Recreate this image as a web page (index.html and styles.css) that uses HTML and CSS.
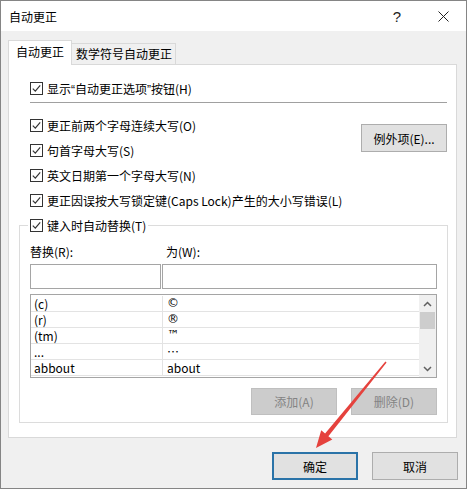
FILE: index.html
```html
<!DOCTYPE html>
<html lang="zh-CN">
<head>
    <meta charset="UTF-8">
    <meta name="viewport" content="width=device-width, initial-scale=1.0">
    <title>自动更正</title>
    <link rel="stylesheet" href="styles.css">
</head>
<body>
    <div class="window">
        <div class="titlebar">
            <span class="title">自动更正</span>
            <span class="tb-btn">?</span>
            <span class="tb-btn">
                <svg width="11" height="11" viewBox="0 0 11 11"><path d="M0.5 0.5 L10.5 10.5 M10.5 0.5 L0.5 10.5" stroke="#222" stroke-width="1"/></svg>
            </span>
        </div>
        <div class="content">
            <div class="tabs">
                <div class="tab active">自动更正</div>
                <div class="tab">数学符号自动更正</div>
            </div>
            <div class="panel">
                <div class="opts">
                    <label class="check"><span class="cb"><svg width="13" height="13" viewBox="0 0 13 13"><rect x="0.5" y="0.5" width="12" height="12" fill="#fff" stroke="#333"/><path d="M2.8 6.6 L5.3 9.1 L10.2 3.4" fill="none" stroke="#333" stroke-width="1.2"/></svg></span><span>显示<span class="latin">“</span>自动更正选项<span class="latin">”</span>按钮(H)</span></label>
                    <div class="sep"></div>
                    <div class="grid">
                        <label class="check"><span class="cb"><svg width="13" height="13" viewBox="0 0 13 13"><rect x="0.5" y="0.5" width="12" height="12" fill="#fff" stroke="#333"/><path d="M2.8 6.6 L5.3 9.1 L10.2 3.4" fill="none" stroke="#333" stroke-width="1.2"/></svg></span>更正前两个字母连续大写(O)</label>
                        <button class="btn exc">例外项(E)...</button>
                        <label class="check"><span class="cb"><svg width="13" height="13" viewBox="0 0 13 13"><rect x="0.5" y="0.5" width="12" height="12" fill="#fff" stroke="#333"/><path d="M2.8 6.6 L5.3 9.1 L10.2 3.4" fill="none" stroke="#333" stroke-width="1.2"/></svg></span>句首字母大写(S)</label>
                        <label class="check"><span class="cb"><svg width="13" height="13" viewBox="0 0 13 13"><rect x="0.5" y="0.5" width="12" height="12" fill="#fff" stroke="#333"/><path d="M2.8 6.6 L5.3 9.1 L10.2 3.4" fill="none" stroke="#333" stroke-width="1.2"/></svg></span>英文日期第一个字母大写(N)</label>
                        <label class="check wide"><span class="cb"><svg width="13" height="13" viewBox="0 0 13 13"><rect x="0.5" y="0.5" width="12" height="12" fill="#fff" stroke="#333"/><path d="M2.8 6.6 L5.3 9.1 L10.2 3.4" fill="none" stroke="#333" stroke-width="1.2"/></svg></span>更正因误按大写锁定键(Caps Lock)产生的大小写错误(L)</label>
                    </div>
                </div>
                <fieldset class="group">
                    <legend><label class="check"><span class="cb"><svg width="13" height="13" viewBox="0 0 13 13"><rect x="0.5" y="0.5" width="12" height="12" fill="#fff" stroke="#333"/><path d="M2.8 6.6 L5.3 9.1 L10.2 3.4" fill="none" stroke="#333" stroke-width="1.2"/></svg></span>键入时自动替换(T)</label></legend>
                    <div class="fields">
                        <span class="flabel">替换(R):</span>
                        <span class="flabel second">为(W):</span>
                        <div class="input"></div>
                        <div class="input"></div>
                    </div>
                    <div class="list">
                        <div class="rows">
                            <div class="row"><span>(c)</span><span class="sym">©</span></div>
                            <div class="row"><span>(r)</span><span class="sym">®</span></div>
                            <div class="row"><span>(tm)</span><span class="sym">™</span></div>
                            <div class="row"><span>...</span><span>…</span></div>
                            <div class="row"><span>abbout</span><span>about</span></div>
                        </div>
                        <div class="scroll">
                            <div class="arrow"><svg width="9" height="6" viewBox="0 0 9 6"><path d="M1 5 L4.5 1.5 L8 5" fill="none" stroke="#606060" stroke-width="1.5"/></svg></div>
                            <div class="thumb"></div>
                            <div class="track"></div>
                            <div class="arrow"><svg width="9" height="6" viewBox="0 0 9 6"><path d="M1 1 L4.5 4.5 L8 1" fill="none" stroke="#606060" stroke-width="1.5"/></svg></div>
                        </div>
                    </div>
                    <div class="actions">
                        <button class="btn disabled">添加(A)</button>
                        <button class="btn disabled">删除(D)</button>
                    </div>
                </fieldset>
            </div>
            <div class="footer">
                <button class="btn default">确定</button>
                <button class="btn">取消</button>
            </div>
        </div>
        <svg class="pointer" width="467" height="490" viewBox="0 0 467 490">
            <polygon points="386.6,362.4 328.4,436.3 332.3,439.4 316,448 321.2,430.2 325.1,433.4 385.4,361.6" fill="#e5423d"/>
        </svg>
    </div>
</body>
</html>
```
FILE: styles.css
```css
* {
    box-sizing: border-box;
}
body {
    margin: 0;
    font-family: "Noto Sans CJK SC", "Microsoft YaHei", sans-serif;
    font-size: 12px;
    color: #000;
    background: #fff;
}
.window {
    position: relative;
    width: 467px;
    height: 489px;
    border: 1px solid #858585;
    background: #f0f0f0;
    overflow: hidden;
}
.titlebar {
    height: 30px;
    background: #fff;
    display: flex;
    align-items: center;
    padding-left: 8px;
}
.title {
    flex: 1;
}
.tb-btn {
    width: 46px;
    height: 30px;
    display: flex;
    align-items: center;
    justify-content: center;
    font-family: "Liberation Sans", sans-serif;
    font-size: 15px;
    color: #222;
}
.content {
    padding: 9px 9px 0 7px;
}
.tabs {
    display: flex;
    align-items: flex-end;
    height: 24px;
}
.tab {
    height: 21px;
    line-height: 19px;
    padding: 0 3px 0 4px;
    border: 1px solid #d9d9d9;
    border-bottom: none;
    border-left: none;
    background: #f0f0f0;
}
.tab.active {
    height: 25px;
    line-height: 22px;
    padding: 0 7px;
    border-left: 1px solid #d9d9d9;
    background: #fff;
    margin-bottom: -1px;
    position: relative;
    z-index: 1;
}
.panel {
    width: 449px;
    height: 374px;
    background: #fff;
    border: 1px solid #d9d9d9;
    padding: 11px 8px 0 10px;
}
.opts {
    margin: 0 1px 0 11px;
}
.check {
    display: flex;
    align-items: center;
    gap: 4px;
    height: 25px;
    white-space: nowrap;
}
.latin {
    font-family: "Liberation Sans", sans-serif;
}
.cb {
    display: flex;
    width: 13px;
    height: 13px;
}
.sep {
    height: 1px;
    background: #a0a0a0;
    margin: 1px 0 10px;
}
.grid {
    display: grid;
    grid-template-columns: 1fr 86px;
}
.grid .wide {
    grid-column: 1 / -1;
}
.btn {
    font-family: inherit;
    font-size: 12px;
    color: #000;
    background: #e1e1e1;
    border: 1px solid #adadad;
    height: 28px;
    width: 86px;
    padding: 0;
}
.exc {
    grid-column: 2;
    grid-row: 1 / span 3;
    align-self: start;
    margin-top: 11px;
}
.group {
    margin: 0;
    padding: 0 10px 7px;
    border: 1px solid #dcdcdc;
}
.group legend {
    padding: 0 2px;
    margin-left: -2px;
}
.fields {
    display: grid;
    grid-template-columns: 131px 1fr;
    column-gap: 1px;
}
.flabel {
    line-height: 16px;
    padding-top: 6px;
    margin-bottom: 4px;
}
.flabel.second {
    padding-left: 4px;
}
.input {
    height: 25px;
    border: 1px solid #a5a5a5;
}
.list {
    display: flex;
    height: 84px;
    margin-top: 5px;
    border: 1px solid #a5a5a5;
}
.rows {
    flex: 1;
    padding-top: 1px;
}
.row {
    display: grid;
    grid-template-columns: 132px 1fr;
    height: 16px;
    line-height: 15px;
    border-bottom: 1px solid #e3e3e3;
}
.row span {
    padding-left: 3px;
}
.row span:first-child {
    border-right: 1px solid #e3e3e3;
}
.row span:last-child {
    padding-left: 4px;
}
.row .sym {
    font-family: "DejaVu Sans", sans-serif;
    font-size: 12px;
}
.scroll {
    width: 17px;
    background: #f0f0f0;
    display: flex;
    flex-direction: column;
}
.arrow {
    height: 17px;
    display: flex;
    align-items: center;
    justify-content: center;
}
.thumb {
    height: 17px;
    margin: 0 1px;
    background: #cdcdcd;
}
.track {
    flex: 1;
}
.actions {
    display: flex;
    justify-content: flex-end;
    gap: 14px;
    margin-top: 10px;
}
.actions .btn {
    height: 27px;
}
.btn.disabled {
    background: #cccccc;
    border-color: #bfbfbf;
    color: #838383;
}
.footer {
    display: flex;
    justify-content: flex-end;
    gap: 14px;
    margin: 14px -1px 0 0;
}
.btn.default {
    border: 2px solid #2a73a8;
}
.pointer {
    position: absolute;
    left: -1px;
    top: -1px;
    pointer-events: none;
}
```
